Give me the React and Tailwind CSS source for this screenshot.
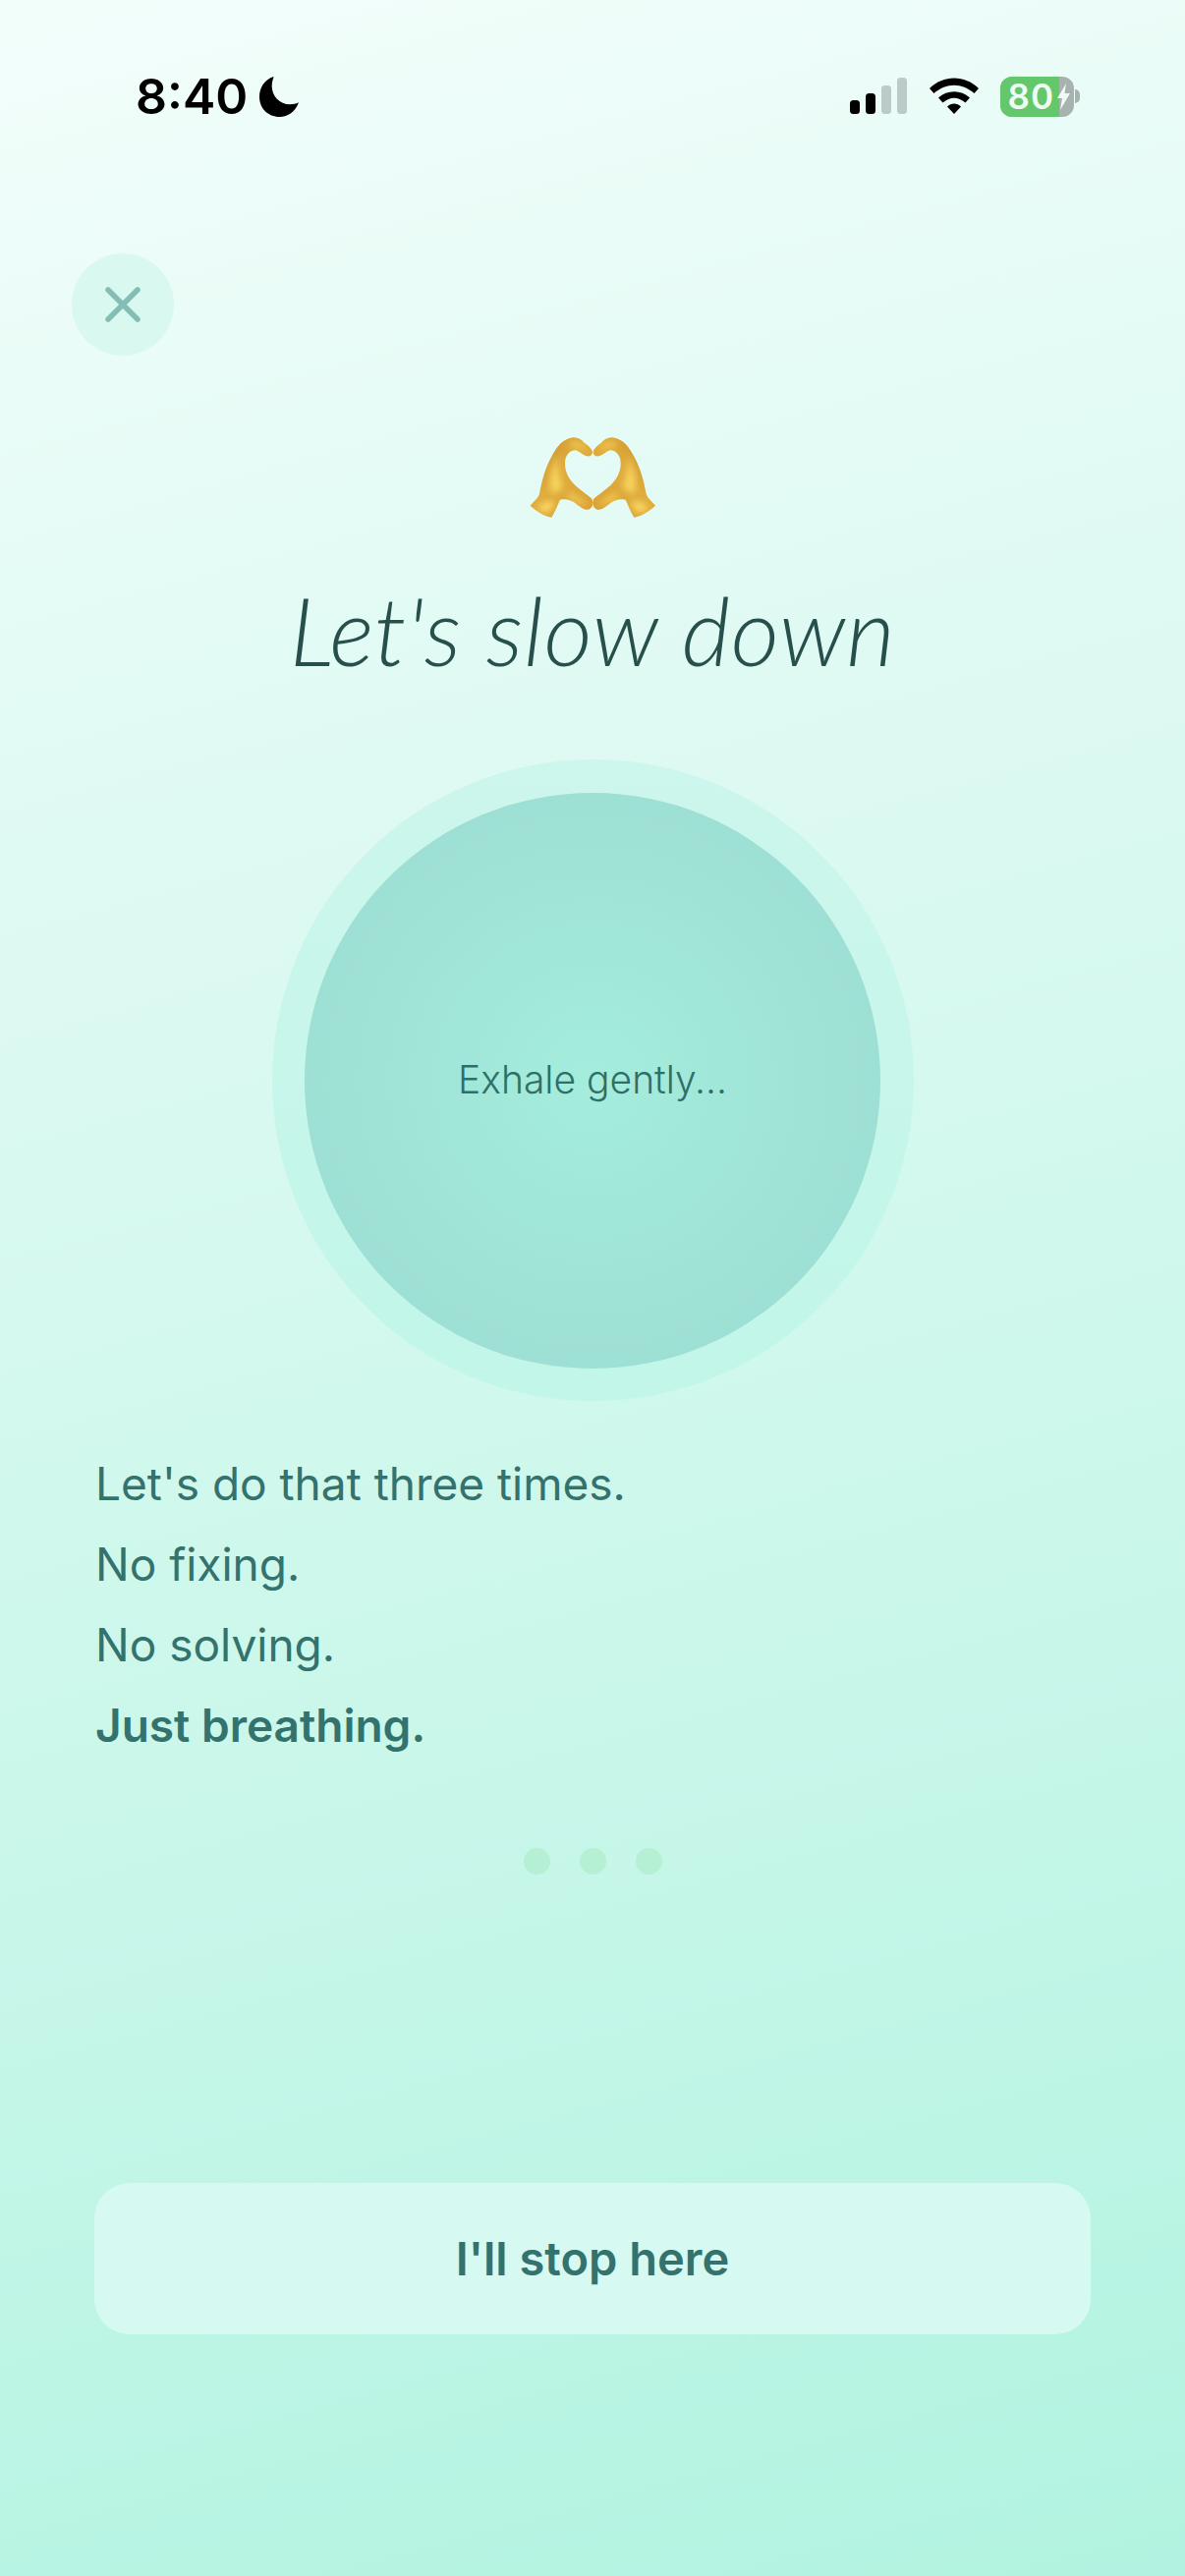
import React from 'react';

// Status bar signal bars + wifi + charging battery
const StatusIcons = () => (
  <div className="flex items-center">
    <svg width="60" height="38" viewBox="0 0 60 38">
      <rect x="2" y="23" width="10" height="14" rx="3.5" fill="#000" />
      <rect x="18" y="16" width="10" height="21" rx="3.5" fill="#000" />
      <rect x="34" y="8" width="10" height="29" rx="3.5" fill="#bccbc7" />
      <rect x="50" y="0" width="10" height="37" rx="3.5" fill="#bccbc7" />
    </svg>
    <svg width="50" height="38" viewBox="0 0 50 38" className="ml-[23px]">
      <path d="M0 11 C14 -3 36 -3 50 11 L45.5 16 C33 5 17 5 4.5 16 Z" fill="#000" />
      <path d="M9 20.5 C18 12 32 12 41 20.5 L36.5 25.5 C29 19 21 19 13.5 25.5 Z" fill="#000" />
      <path d="M18 29.5 C22 25.5 28 25.5 32 29.5 L25 37 Z" fill="#000" />
    </svg>
    <div className="ml-[22px] relative flex w-[75px] h-[41px] rounded-[12px] overflow-hidden bg-[#a6b3af]">
      <div className="w-[60px] h-full bg-[#65c76b] flex items-center justify-end">
        <span className="font-['Inter',sans-serif] font-semibold text-[35px] leading-none tracking-[1px] text-[#effcf3] mr-[5px]">80</span>
      </div>
      <svg width="13" height="27" viewBox="0 0 13 27" className="absolute left-[58px] top-[7px]">
        <path d="M9 0 L0 15 H5 L3 27 L13 10 H7.5 Z" fill="#f2faf7" />
      </svg>
    </div>
    <div className="w-[5px] h-[14px] ml-[1px] rounded-r-[5px] bg-[#a6b3af]" />
  </div>
);

const CloseButton = () => (
  <button className="w-[104px] h-[104px] rounded-full bg-[#d8f8f0] flex items-center justify-center">
    <svg width="38" height="38" viewBox="0 0 38 38" fill="none" stroke="#84bdb3" strokeWidth="5.5" strokeLinecap="round">
      <path d="M4 4 L34 34 M34 4 L4 34" />
    </svg>
  </button>
);

const leftHand =
  'M85 280 C95 268 108 258 113 245 C118 215 128 170 150 130 C165 102 180 82 205 74 C225 68 240 76 250 88 C262 96 272 104 275 115 C276 126 266 132 255 128 C245 124 240 118 228 112 C215 108 200 116 193 135 C186 165 198 195 222 218 C238 232 258 246 272 258 C280 270 276 288 262 292 C250 294 238 284 225 274 C212 264 195 258 176 262 C168 280 160 300 150 316 C128 312 105 298 85 280 Z';

// Heart hands emoji, drawn since there is no emoji font
const HeartHands = () => (
  <svg width="130" height="85" viewBox="80 65 390 255">
    <defs>
      <linearGradient id="handFill" x1="0.1" y1="0.1" x2="0.9" y2="0.9">
        <stop offset="0" stopColor="#c9932c" />
        <stop offset="0.45" stopColor="#e0ad3e" />
        <stop offset="1" stopColor="#d9a236" />
      </linearGradient>
      <filter id="soft" x="-30%" y="-30%" width="160%" height="160%">
        <feGaussianBlur stdDeviation="9" />
      </filter>
      <clipPath id="handClip">
        <path d={leftHand} />
      </clipPath>
    </defs>
    {[0, 1].map((side) => (
      <g key={side} transform={side ? 'translate(552 0) scale(-1 1)' : undefined}>
        <path d={leftHand} fill="url(#handFill)" />
        <g clipPath="url(#handClip)">
          <path d="M170 125 C150 165 140 205 150 245 C165 240 178 232 186 222 C172 195 165 160 170 125 Z" fill="#f6d35c" filter="url(#soft)" />
          <path d="M105 285 C120 270 140 262 160 268 C155 285 145 298 135 302 C122 300 112 294 105 285 Z" fill="#f8d661" filter="url(#soft)" />
          <path d="M205 85 C225 78 245 90 255 110 C240 112 225 100 205 100 Z" fill="#f0c550" filter="url(#soft)" />
          <path d="M200 240 C225 245 245 262 262 280 C245 280 222 268 200 258 Z" fill="#f2c852" filter="url(#soft)" />
        </g>
      </g>
    ))}
  </svg>
);

const App = () => {
  return (
    <div className="w-[1206px] h-[2622px] overflow-hidden flex flex-col font-['Inter',sans-serif] bg-[linear-gradient(165deg,#f3fefb_0%,#dffaf3_30%,#c9f7ea_65%,#b1f3e0_100%)]">
      {/* Status bar */}
      <div className="flex items-center justify-between h-[42px] mt-[77px] pl-[138px] pr-[107px]">
        <div className="flex items-center gap-[12px]">
          <span className="text-[50px] leading-none font-semibold text-black">8:40</span>
          <svg width="41" height="41" viewBox="0 0 42 42">
            <path d="M15 0 C5 3 0 12 0 21 C0 33 9 42 21 42 C30 42 37 37 41 27 C38 28.5 35 29 32 29 C21 29 13 20 13 10 C13 6 14 3 15 0 Z" fill="#000" />
          </svg>
        </div>
        <StatusIcons />
      </div>

      <div className="mt-[139px] pl-[73px]">
        <CloseButton />
      </div>

      <div className="mt-[81px] flex justify-center">
        <HeartHands />
      </div>

      <h1 className="mt-[61px] text-center text-[96px] leading-[104px] italic font-light tracking-[0.5px] font-['Lato',serif] text-[#27504c]">
        Let's slow down
      </h1>

      {/* Breathing circle */}
      <div className="mt-[80px] mx-auto w-[653px] h-[653px] rounded-full bg-[linear-gradient(180deg,#cdf6ed,#c1f6e9)] flex items-center justify-center">
        <div className="w-[586px] h-[586px] rounded-full bg-[radial-gradient(circle,#a4eddd_0%,#9bdad0_100%)] flex items-center justify-center">
          <span className="text-[39px] font-light text-[#2f6f68]">Exhale gently...</span>
        </div>
      </div>

      <div className="mt-[43px] pl-[97px] flex flex-col text-[46px] leading-[82px] text-[#34736d]">
        <p>Let's do that three times.</p>
        <p>No fixing.</p>
        <p>No solving.</p>
        <p className="font-semibold">Just breathing.</p>
      </div>

      <div className="mt-[84px] flex justify-center gap-[30px]">
        <div className="w-[27px] h-[27px] rounded-full bg-[#b5f0d4]" />
        <div className="w-[27px] h-[27px] rounded-full bg-[#b5f0d4]" />
        <div className="w-[27px] h-[27px] rounded-full bg-[#b5f0d4]" />
      </div>

      <button className="mt-[314px] mx-[96px] h-[154px] rounded-[36px] bg-[#d6f9f1] text-[47px] font-semibold text-[#34736d]">
        I'll stop here
      </button>
    </div>
  );
};

export default App;
